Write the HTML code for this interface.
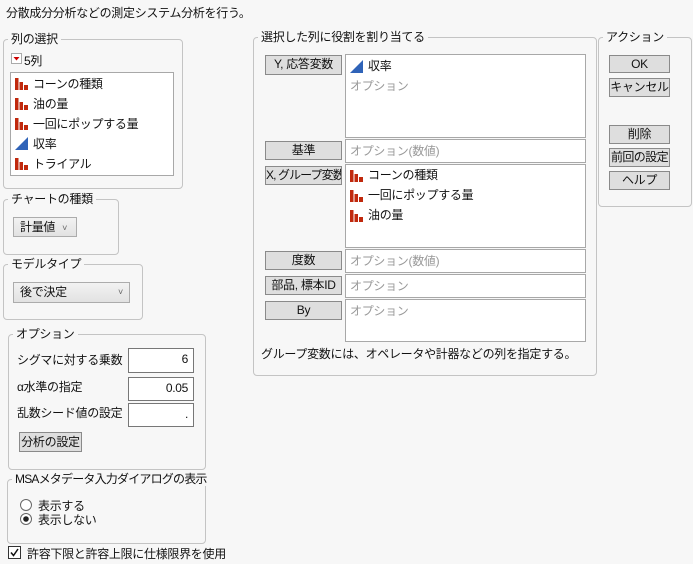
<!DOCTYPE html><html><head><meta charset="utf-8"><style>
body{margin:0;width:693px;height:564px;background:#f7f7f7;font-family:"Liberation Sans","Noto Sans CJK JP",sans-serif;font-size:12px;letter-spacing:-0.3px;color:#111;position:relative;overflow:hidden}
.a{position:absolute;white-space:nowrap}
.g{position:absolute;border:1px solid #c4c4c4;border-radius:4px}
.lg{position:absolute;background:#f7f7f7;padding:0 3px;line-height:14px;top:-8px;left:4px;white-space:nowrap}
.btn{position:absolute;background:#dedede;border:1px solid #8a8a8a;text-align:center;line-height:16px;box-sizing:border-box;white-space:nowrap;overflow:hidden}
.box{position:absolute;background:#fff;border:1px solid #a8a8a8;box-sizing:border-box}
.ph{color:#999}
.it{position:absolute;white-space:nowrap;line-height:16px}
.dd{position:absolute;background:linear-gradient(#f2f2f2,#e2e2e2);border:1px solid #acacac;box-sizing:border-box;line-height:18px;padding-left:6px}
.inp{position:absolute;background:#fff;border:1px solid #777;box-sizing:border-box;text-align:right;padding-right:5px;line-height:20px}
</style></head><body>
<svg width="0" height="0" style="position:absolute"><defs>
<symbol id="bar" viewBox="0 0 13 13"><rect x="0" y="1" width="3.5" height="12" fill="#c0280c"/><rect x="4.5" y="5" width="3.5" height="8" fill="#c0280c"/><rect x="9" y="8" width="4" height="5" fill="#c0280c"/></symbol>
<symbol id="tri" viewBox="0 0 13 13"><path d="M0 13L13 0V13Z" fill="#2f63b8"/></symbol>
</defs></svg>
<div class="a" style="left:6px;top:4px">分散成分分析などの測定システム分析を行う。</div>

<div class="g" style="left:3px;top:39px;width:178px;height:148px"><span class="lg">列の選択</span></div>
<svg class="a" style="left:11px;top:53px" width="11" height="11"><rect x=".5" y=".5" width="10" height="10" fill="#fff" stroke="#aaa"/><path d="M2.5 4h6l-3 3.5z" fill="#c00"/></svg>
<div class="a" style="left:24px;top:52px">5列</div>
<div class="box" style="left:10px;top:72px;width:164px;height:104px"></div>
<svg class="a" style="left:15px;top:77px" width="13" height="13"><use href="#bar"/></svg><div class="it" style="left:33px;top:76px">コーンの種類</div>
<svg class="a" style="left:15px;top:97px" width="13" height="13"><use href="#bar"/></svg><div class="it" style="left:33px;top:96px">油の量</div>
<svg class="a" style="left:15px;top:117px" width="13" height="13"><use href="#bar"/></svg><div class="it" style="left:33px;top:116px">一回にポップする量</div>
<svg class="a" style="left:15px;top:137px" width="13" height="13"><use href="#tri"/></svg><div class="it" style="left:33px;top:136px">収率</div>
<svg class="a" style="left:15px;top:157px" width="13" height="13"><use href="#bar"/></svg><div class="it" style="left:33px;top:156px">トライアル</div>

<div class="g" style="left:3px;top:199px;width:114px;height:54px"><span class="lg">チャートの種類</span></div>
<div class="dd" style="left:13px;top:217px;width:64px;height:20px">計量値 <span style="font-size:9px;color:#666;margin-left:4px">˅</span></div>

<div class="g" style="left:3px;top:264px;width:138px;height:54px"><span class="lg">モデルタイプ</span></div>
<div class="dd" style="left:13px;top:282px;width:117px;height:21px">後で決定<span style="position:absolute;right:6px;font-size:9px;color:#666">˅</span></div>

<div class="g" style="left:8px;top:334px;width:196px;height:134px"><span class="lg">オプション</span></div>
<div class="a" style="left:17px;top:351px">シグマに対する乗数</div>
<div class="inp" style="left:128px;top:348px;width:66px;height:25px">6</div>
<div class="a" style="left:17px;top:378px">α水準の指定</div>
<div class="inp" style="left:128px;top:377px;width:66px;height:24px">0.05</div>
<div class="a" style="left:17px;top:404px">乱数シード値の設定</div>
<div class="inp" style="left:128px;top:403px;width:66px;height:24px">.</div>
<div class="btn" style="left:19px;top:432px;width:63px;height:20px;line-height:18px">分析の設定</div>

<div class="g" style="left:7px;top:479px;width:197px;height:63px"><span class="lg" style="letter-spacing:-0.8px">MSAメタデータ入力ダイアログの表示</span></div>
<svg class="a" style="left:20px;top:499px" width="12" height="12"><circle cx="6" cy="6" r="5.5" fill="#fff" stroke="#666"/></svg>
<div class="a" style="left:38px;top:497px">表示する</div>
<svg class="a" style="left:20px;top:513px" width="12" height="12"><circle cx="6" cy="6" r="5.5" fill="#fff" stroke="#666"/><circle cx="6" cy="6" r="2.8" fill="#222"/></svg>
<div class="a" style="left:38px;top:511px">表示しない</div>

<svg class="a" style="left:8px;top:546px" width="13" height="13"><rect x=".5" y=".5" width="12" height="12" fill="#fff" stroke="#333"/><path d="M3 6.5l2.5 3 4.5-6.5" fill="none" stroke="#111" stroke-width="1.5"/></svg>
<div class="a" style="left:27px;top:545px">許容下限と許容上限に仕様限界を使用</div>

<div class="g" style="left:253px;top:37px;width:342px;height:337px"><span class="lg">選択した列に役割を割り当てる</span></div>
<div class="btn" style="left:265px;top:55px;width:77px;height:20px">Y, 応答変数</div>
<div class="box" style="left:345px;top:54px;width:241px;height:84px"></div>
<svg class="a" style="left:350px;top:60px" width="13" height="13"><use href="#tri"/></svg><div class="it" style="left:368px;top:58px">収率</div>
<div class="it ph" style="left:350px;top:78px">オプション</div>
<div class="btn" style="left:265px;top:141px;width:77px;height:19px">基準</div>
<div class="box" style="left:345px;top:139px;width:241px;height:24px"></div>
<div class="it ph" style="left:350px;top:143px">オプション(数値)</div>
<div class="btn" style="left:265px;top:166px;width:77px;height:19px;letter-spacing:-0.9px">X, グループ変数</div>
<div class="box" style="left:345px;top:164px;width:241px;height:84px"></div>
<svg class="a" style="left:350px;top:169px" width="13" height="13"><use href="#bar"/></svg><div class="it" style="left:368px;top:167px">コーンの種類</div>
<svg class="a" style="left:350px;top:189px" width="13" height="13"><use href="#bar"/></svg><div class="it" style="left:368px;top:187px">一回にポップする量</div>
<svg class="a" style="left:350px;top:209px" width="13" height="13"><use href="#bar"/></svg><div class="it" style="left:368px;top:207px">油の量</div>
<div class="btn" style="left:265px;top:251px;width:77px;height:19px">度数</div>
<div class="box" style="left:345px;top:249px;width:241px;height:24px"></div>
<div class="it ph" style="left:350px;top:253px">オプション(数値)</div>
<div class="btn" style="left:265px;top:276px;width:77px;height:19px">部品, 標本ID</div>
<div class="box" style="left:345px;top:274px;width:241px;height:24px"></div>
<div class="it ph" style="left:350px;top:278px">オプション</div>
<div class="btn" style="left:265px;top:301px;width:77px;height:19px">By</div>
<div class="box" style="left:345px;top:299px;width:241px;height:43px"></div>
<div class="it ph" style="left:350px;top:303px">オプション</div>
<div class="a" style="left:261px;top:345px">グループ変数には、オペレータや計器などの列を指定する。</div>

<div class="g" style="left:598px;top:37px;width:92px;height:168px"><span class="lg">アクション</span></div>
<div class="btn" style="left:609px;top:55px;width:61px;height:18px">OK</div>
<div class="btn" style="left:609px;top:78px;width:61px;height:19px">キャンセル</div>
<div class="btn" style="left:609px;top:125px;width:61px;height:19px">削除</div>
<div class="btn" style="left:609px;top:148px;width:61px;height:19px;letter-spacing:-0.6px">前回の設定</div>
<div class="btn" style="left:609px;top:171px;width:61px;height:19px">ヘルプ</div>
</body></html>
